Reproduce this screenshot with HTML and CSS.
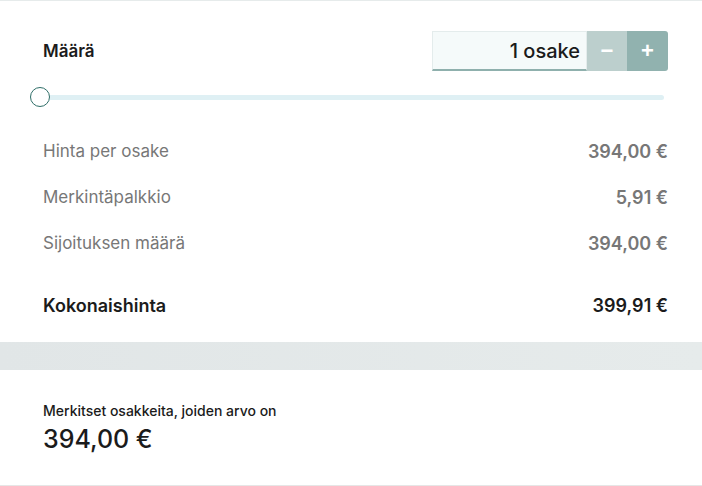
FILE: index.html
```html
<!DOCTYPE html>
<html>
<head>
<meta charset="utf-8">
<title>Merkintä</title>
<link rel="stylesheet" href="styles.css">
</head>
<body>
  <div class="order-box">
    <div class="qty-head">
      <span class="qty-label">Määrä</span>
      <div class="stepper">
        <input class="qty-input" type="text" value="1 osake">
        <button type="button" class="step step-minus">&minus;</button>
        <button type="button" class="step step-plus">+</button>
      </div>
    </div>

    <div class="slider">
      <span class="slider-thumb"></span>
      <span class="slider-track"></span>
    </div>

    <table class="price-table">
      <tr>
        <td>Hinta per osake</td>
        <td>394,00 €</td>
      </tr>
      <tr>
        <td>Merkintäpalkkio</td>
        <td>5,91 €</td>
      </tr>
      <tr>
        <td>Sijoituksen määrä</td>
        <td>394,00 €</td>
      </tr>
      <tr class="total">
        <td>Kokonaishinta</td>
        <td>399,91 €</td>
      </tr>
    </table>
  </div>

  <div class="divider-band"></div>

  <div class="summary">
    <div class="summary-label">Merkitset osakkeita, joiden arvo on</div>
    <div class="summary-value">394,00 €</div>
  </div>
</body>
</html>
```

FILE: styles.css
```css
html, body { margin: 0; padding: 0; background: #ffffff; }
body { font-family: Inter, "Liberation Sans", Arial, sans-serif; color: #1b1b1b; }

.order-box { border-top: 1px solid #e6ebeb; padding: 30px 34px 14px 43px; }

.qty-head { display: flex; align-items: center; justify-content: space-between; height: 40px; }
.qty-label { font-size: 17px; font-weight: 600; color: #1b1b1b; }

.stepper { display: flex; height: 40px; }
.qty-input { width: 155px; box-sizing: border-box; height: 40px; border: 1px solid #e4ecec; border-bottom: 2px solid #8fb0ad; background: #f5fafa; text-align: right; padding: 0 6px 0 0; font-family: Inter, "Liberation Sans", Arial, sans-serif; font-size: 20px; font-weight: 500; color: #1b1b1b; outline: none; }
.step { width: 40px; height: 40px; border: 0; padding: 0; color: #ffffff; font-family: "Liberation Sans", Arial, sans-serif; font-size: 22px; font-weight: bold; line-height: 40px; }
.step-minus { background: #bccfcd; }
.step-plus { background: #91b2af; width: 41px; border-radius: 0 3px 3px 0; }

.slider { display: flex; align-items: center; margin: 15px 4px 0 -13px; height: 22px; }
.slider-thumb { width: 18px; height: 18px; border: 1.5px solid #2f6e68; border-radius: 50%; background: #ffffff; flex: none; }
.slider-track { flex: 1; height: 5px; background: #dff0f4; border-radius: 0 3px 3px 0; }

.price-table { width: 100%; border-collapse: collapse; margin-top: 20px; }
.price-table td { height: 46px; padding: 0; font-size: 17px; color: #777777; }
.price-table td:last-child { text-align: right; font-weight: 600; font-size: 18px; }
.price-table tr.total td { color: #1b1b1b; font-weight: 600; height: 46px; padding-top: 16px; font-size: 18px; }

.divider-band { height: 28px; background: linear-gradient(90deg, #e1e6e7, #e6ebeb); }

.summary { box-sizing: border-box; height: 116px; padding: 33px 43px 0; border-bottom: 1px solid #e6e6e6; }
.summary-label { font-size: 14px; font-weight: 500; color: #1b1b1b; line-height: 16px; }
.summary-value { font-size: 25px; font-weight: 500; color: #1b1b1b; margin-top: 5px; line-height: 30px; }
```
